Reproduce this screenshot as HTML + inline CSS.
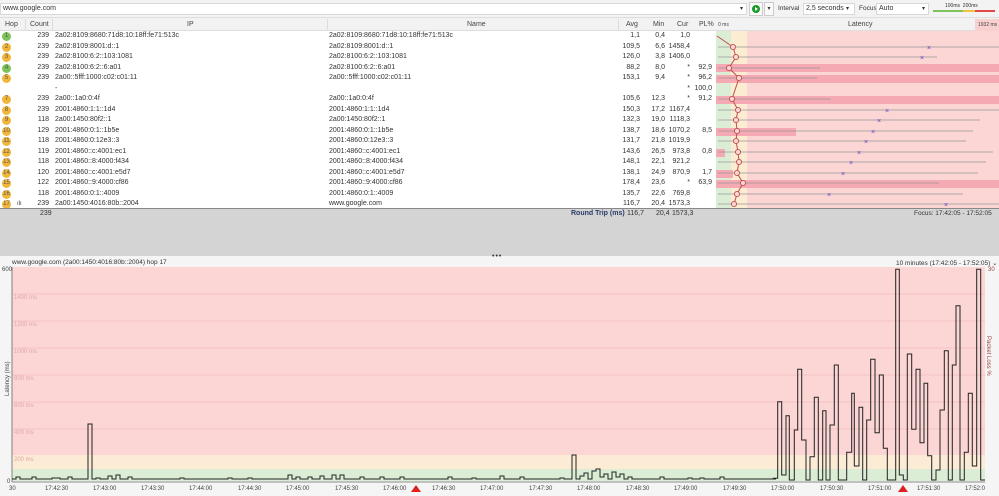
<!DOCTYPE html>
<html><head><meta charset="utf-8"><style>
*{margin:0;padding:0;box-sizing:border-box}
body{width:999px;height:496px;overflow:hidden;background:#fff;font-family:"Liberation Sans",sans-serif;font-size:7px;color:#333;position:relative}
.a{position:absolute;white-space:nowrap}
.r{position:absolute;left:0;width:999px;height:10.5px;line-height:10.5px}
.r span{position:absolute;white-space:nowrap}
.h{position:absolute;top:1px;width:9px;height:9px;border-radius:50%;left:2px;font-size:6px;line-height:9px;text-align:center;color:#555;font-style:normal}
.g{background:#7cc35a}.o{background:#f2b63a}
.c{right:950px;text-align:right}.ip{left:55px}.nm{left:329px}
.av{right:359px}.mn{right:334px}.cu{right:309px}.pl{right:287px}
.hd{position:absolute;top:19px;height:12px;line-height:12px;color:#444;font-size:7px}
</style></head><body>
<!-- toolbar -->
<div class="a" style="left:0;top:0;width:999px;height:18px;background:#f3f3f3;border-bottom:1px solid #ddd"></div>
<div class="a" style="left:0;top:3px;width:747px;height:12px;background:#fff;border:1px solid #d8d8d8;padding-left:2px;line-height:10px">www.google.com</div>
<div class="a" style="left:740px;top:5px;font-size:6px">▾</div>
<div class="a" style="left:749px;top:2px;width:14px;height:14px;border:1px solid #ccc;background:#fafafa"></div>
<div class="a" style="left:752px;top:5px;width:8px;height:8px;border-radius:50%;background:#1a9a2a"></div>
<div class="a" style="left:755px;top:7px;width:0;height:0;border-left:3px solid #fff;border-top:2px solid transparent;border-bottom:2px solid transparent"></div>
<div class="a" style="left:764px;top:2px;width:10px;height:14px;border:1px solid #ccc;background:#fafafa;font-size:6px;text-align:center;line-height:12px">▾</div>
<div class="a" style="left:778px;top:5px;font-size:6.5px">Interval</div>
<div class="a" style="left:803px;top:3px;width:52px;height:12px;background:#fff;border:1px solid #d8d8d8;padding-left:2px;line-height:10px;font-size:7px">2,5 seconds</div>
<div class="a" style="left:846px;top:5px;font-size:6px">▾</div>
<div class="a" style="left:859px;top:5px;font-size:6.5px">Focus</div>
<div class="a" style="left:876px;top:3px;width:53px;height:12px;background:#fff;border:1px solid #d8d8d8;padding-left:2px;line-height:10px;font-size:7px">Auto</div>
<div class="a" style="left:922px;top:5px;font-size:6px">▾</div>
<div class="a" style="left:945px;top:3px;font-size:5px">100ms&nbsp;&nbsp;200ms</div>
<div class="a" style="left:933px;top:10px;width:62px;height:2px;background:linear-gradient(90deg,#7cc35a 0,#7cc35a 48%,#f2c340 48%,#f2c340 68%,#e04848 68%)"></div>
<!-- header -->
<div class="a" style="left:0;top:18px;width:999px;height:13px;background:#f2f2f2;border-bottom:1px solid #ddd"></div>
<div class="hd" style="left:5px">Hop</div>
<div class="hd" style="left:30px">Count</div>
<div class="hd" style="left:187px">IP</div>
<div class="hd" style="left:467px">Name</div>
<div class="hd" style="left:626px">Avg</div>
<div class="hd" style="left:653px">Min</div>
<div class="hd" style="left:677px">Cur</div>
<div class="hd" style="left:699px">PL%</div>
<div class="hd" style="left:718px;font-size:5px">0 ms</div>
<div class="hd" style="left:848px">Latency</div>
<div class="a" style="left:975px;top:19px;width:24px;height:12px;background:#f9d0d0"></div>
<div class="hd" style="left:978px;font-size:5px">1932 ms</div>
<div class="a" style="left:25px;top:19px;width:1px;height:12px;background:#ddd"></div>
<div class="a" style="left:52px;top:19px;width:1px;height:12px;background:#ddd"></div>
<div class="a" style="left:327px;top:19px;width:1px;height:12px;background:#ddd"></div>
<div class="a" style="left:618px;top:19px;width:1px;height:12px;background:#ddd"></div>

<!-- rows -->
<div class="r" style="top:31px"><i class="h g">1</i><span class="c">239</span><span class="ip">2a02:8109:8680:71d8:10:18ff:fe71:513c</span><span class="nm">2a02:8109:8680:71d8:10:18ff:fe71:513c</span><span class="av">1,1</span><span class="mn">0,4</span><span class="cu">1,0</span></div>
<div class="r" style="top:41.5px"><i class="h o">2</i><span class="c">239</span><span class="ip">2a02:8109:8001:d::1</span><span class="nm">2a02:8109:8001:d::1</span><span class="av">109,5</span><span class="mn">6,6</span><span class="cu">1458,4</span></div>
<div class="r" style="top:52px"><i class="h o">3</i><span class="c">239</span><span class="ip">2a02:8100:6:2::103:1081</span><span class="nm">2a02:8100:6:2::103:1081</span><span class="av">126,0</span><span class="mn">3,8</span><span class="cu">1406,0</span></div>
<div class="r" style="top:62.5px"><i class="h g">4</i><span class="c">239</span><span class="ip">2a02:8100:6:2::6:a01</span><span class="nm">2a02:8100:6:2::6:a01</span><span class="av">88,2</span><span class="mn">8,0</span><span class="cu">*</span><span class="pl">92,9</span></div>
<div class="r" style="top:73px"><i class="h o">5</i><span class="c">239</span><span class="ip">2a00::5fff:1000:c02:c01:11</span><span class="nm">2a00::5fff:1000:c02:c01:11</span><span class="av">153,1</span><span class="mn">9,4</span><span class="cu">*</span><span class="pl">96,2</span></div>
<div class="r" style="top:83.5px"><span class="ip">-</span><span class="cu">*</span><span class="pl">100,0</span></div>
<div class="r" style="top:94px"><i class="h o">7</i><span class="c">239</span><span class="ip">2a00::1a0:0:4f</span><span class="nm">2a00::1a0:0:4f</span><span class="av">105,6</span><span class="mn">12,3</span><span class="cu">*</span><span class="pl">91,2</span></div>
<div class="r" style="top:104.5px"><i class="h o">8</i><span class="c">239</span><span class="ip">2001:4860:1:1::1d4</span><span class="nm">2001:4860:1:1::1d4</span><span class="av">150,3</span><span class="mn">17,2</span><span class="cu">1167,4</span></div>
<div class="r" style="top:115px"><i class="h o">9</i><span class="c">118</span><span class="ip">2a00:1450:80f2::1</span><span class="nm">2a00:1450:80f2::1</span><span class="av">132,3</span><span class="mn">19,0</span><span class="cu">1118,3</span></div>
<div class="r" style="top:125.5px"><i class="h o">10</i><span class="c">129</span><span class="ip">2001:4860:0:1::1b5e</span><span class="nm">2001:4860:0:1::1b5e</span><span class="av">138,7</span><span class="mn">18,6</span><span class="cu">1070,2</span><span class="pl">8,5</span></div>
<div class="r" style="top:136px"><i class="h o">11</i><span class="c">118</span><span class="ip">2001:4860:0:12e3::3</span><span class="nm">2001:4860:0:12e3::3</span><span class="av">131,7</span><span class="mn">21,8</span><span class="cu">1019,9</span></div>
<div class="r" style="top:146.5px"><i class="h o">12</i><span class="c">119</span><span class="ip">2001:4860::c:4001:ec1</span><span class="nm">2001:4860::c:4001:ec1</span><span class="av">143,6</span><span class="mn">26,5</span><span class="cu">973,8</span><span class="pl">0,8</span></div>
<div class="r" style="top:157px"><i class="h o">13</i><span class="c">118</span><span class="ip">2001:4860::8:4000:f434</span><span class="nm">2001:4860::8:4000:f434</span><span class="av">148,1</span><span class="mn">22,1</span><span class="cu">921,2</span></div>
<div class="r" style="top:167.5px"><i class="h o">14</i><span class="c">120</span><span class="ip">2001:4860::c:4001:e5d7</span><span class="nm">2001:4860::c:4001:e5d7</span><span class="av">138,1</span><span class="mn">24,9</span><span class="cu">870,9</span><span class="pl">1,7</span></div>
<div class="r" style="top:178px"><i class="h o">15</i><span class="c">122</span><span class="ip">2001:4860::9:4000:cf86</span><span class="nm">2001:4860::9:4000:cf86</span><span class="av">178,4</span><span class="mn">23,6</span><span class="cu">*</span><span class="pl">63,9</span></div>
<div class="r" style="top:188.5px"><i class="h o">16</i><span class="c">118</span><span class="ip">2001:4860:0:1::4009</span><span class="nm">2001:4860:0:1::4009</span><span class="av">135,7</span><span class="mn">22,6</span><span class="cu">769,8</span></div>
<div class="r" style="top:199px"><i class="h o">17</i><span style="left:17px;font-size:6px">ılı</span><span class="c">239</span><span class="ip">2a00:1450:4016:80b::2004</span><span class="nm">www.google.com</span><span class="av">116,7</span><span class="mn">20,4</span><span class="cu">1573,3</span></div>

<!-- latency graph -->
<svg class="a" style="left:716px;top:31px" width="283" height="178">
<rect x="0" y="0" width="15" height="178" fill="#dcedd5"/>
<rect x="15" y="0" width="16" height="178" fill="#fbecd2"/>
<rect x="31" y="0" width="252" height="178" fill="#fcd5d5"/>
<g fill="#f5a9b2">
<rect x="0" y="33" width="283" height="8"/><rect x="0" y="44" width="283" height="8"/><rect x="0" y="65" width="283" height="8"/>
<rect x="0" y="97" width="80" height="8"/><rect x="0" y="118" width="9" height="8"/><rect x="0" y="139" width="17" height="8"/><rect x="0" y="149" width="283" height="8"/>
</g>
<g stroke="#999" stroke-width="0.7">
<line x1="2" y1="16" x2="283" y2="16"/><line x1="2" y1="26" x2="221" y2="26"/><line x1="2" y1="37" x2="104" y2="37"/><line x1="2" y1="47" x2="101" y2="47"/><line x1="2" y1="68" x2="115" y2="68"/><line x1="2" y1="79" x2="283" y2="79"/><line x1="2" y1="89" x2="264" y2="89"/><line x1="2" y1="100" x2="257" y2="100"/><line x1="2" y1="110" x2="250" y2="110"/><line x1="2" y1="121" x2="277" y2="121"/><line x1="2" y1="131" x2="270" y2="131"/><line x1="2" y1="142" x2="262" y2="142"/><line x1="2" y1="152" x2="223" y2="152"/><line x1="2" y1="163" x2="247" y2="163"/><line x1="2" y1="173" x2="283" y2="173"/>
</g>
<polyline fill="none" stroke="#c0504d" stroke-width="1" points="1,5 17,16 20,26 13,37 23,47 16,68 22,79 20,89 21,100 20,110 22,121 23,131 21,142 27,152 21,163 18,173"/>
<g fill="#fcd5d5" stroke="#c0504d" stroke-width="0.9">
<circle cx="17" cy="16" r="2.6"/><circle cx="20" cy="26" r="2.6"/><circle cx="13" cy="37" r="2.6"/><circle cx="23" cy="47" r="2.6"/><circle cx="16" cy="68" r="2.6"/><circle cx="22" cy="79" r="2.6"/><circle cx="20" cy="89" r="2.6"/><circle cx="21" cy="100" r="2.6"/><circle cx="20" cy="110" r="2.6"/><circle cx="22" cy="121" r="2.6"/><circle cx="23" cy="131" r="2.6"/><circle cx="21" cy="142" r="2.6"/><circle cx="27" cy="152" r="2.6"/><circle cx="21" cy="163" r="2.6"/><circle cx="18" cy="173" r="2.6"/>
</g>
<g fill="#5a3fc0" font-size="7" font-family="Liberation Sans">
<text x="211" y="19">×</text><text x="204" y="29">×</text><text x="169" y="82">×</text><text x="161" y="92">×</text><text x="155" y="103">×</text><text x="148" y="113">×</text><text x="141" y="124">×</text><text x="133" y="134">×</text><text x="125" y="145">×</text><text x="111" y="166">×</text><text x="228" y="176">×</text>
</g>
</svg>

<!-- gray area -->
<div class="a" style="left:0;top:208px;width:999px;height:48px;background:#d4d4d4;border-top:1px solid #888"></div>
<div class="a" style="left:40px;top:210px">239</div>
<div class="a" style="left:571px;top:210px;color:#2a3a6a;font-weight:bold">Round Trip (ms)</div>
<div class="a" style="left:627px;top:210px">116,7</div>
<div class="a" style="left:656px;top:210px">20,4</div>
<div class="a" style="left:672px;top:210px">1573,3</div>
<div class="a" style="left:914px;top:210px;font-size:6.5px">Focus: 17:42:05 - 17:52:05</div>
<div class="a" style="left:0;top:256px;width:999px;height:240px;background:#f5f5f5"></div>
<div class="a" style="left:492px;top:253px;font-size:7px;letter-spacing:1px">•••</div>
<div class="a" style="left:12px;top:259px;font-size:6.5px">www.google.com (2a00:1450:4016:80b::2004) hop 17</div>
<div class="a" style="left:896px;top:259px;font-size:6.5px">10 minutes (17:42:05 - 17:52:05) ⌄</div>

<!-- chart -->
<svg class="a" style="left:0;top:266px" width="999" height="230" font-family="Liberation Sans">
<rect x="12" y="1" width="973" height="188" fill="#fcd5d5"/>
<rect x="12" y="189" width="973" height="14" fill="#fcebd5"/>
<rect x="12" y="203" width="973" height="12" fill="#dcedd5"/>
<g stroke="#f0bcbc" stroke-width="0.7"><line x1="12" y1="28" x2="985" y2="28"/><line x1="12" y1="55" x2="985" y2="55"/><line x1="12" y1="82" x2="985" y2="82"/><line x1="12" y1="109" x2="985" y2="109"/><line x1="12" y1="136" x2="985" y2="136"/><line x1="12" y1="163" x2="985" y2="163"/></g>
<g fill="#e0a8a8" font-size="6"><text x="14" y="33">1400 ms</text><text x="14" y="60">1200 ms</text><text x="14" y="87">1000 ms</text><text x="14" y="114">800 ms</text><text x="14" y="141">600 ms</text><text x="14" y="168">400 ms</text><text x="14" y="195">200 ms</text></g>
<line x1="12" y1="1" x2="12" y2="216" stroke="#666" stroke-width="0.8"/>
<line x1="12" y1="216" x2="985" y2="216" stroke="#666" stroke-width="0.8"/>
<text x="2" y="5" font-size="6" fill="#444">600</text>
<text x="7" y="217" font-size="6" fill="#444">0</text>
<text x="988" y="5" font-size="6" fill="#a04040">30</text>
<text transform="translate(9,130) rotate(-90)" font-size="6" fill="#444">Latency (ms)</text>
<text transform="translate(987,70) rotate(90)" font-size="6" fill="#a04040">Packet Loss %</text>
<path id="ln" fill="none" stroke="#222" stroke-width="1" d=""/>
<g font-size="6" fill="#444">
<text x="9" y="224">30</text><text x="45" y="224">17:42:30</text><text x="93" y="224">17:43:00</text><text x="141" y="224">17:43:30</text><text x="189" y="224">17:44:00</text><text x="238" y="224">17:44:30</text><text x="286" y="224">17:45:00</text><text x="335" y="224">17:45:30</text><text x="383" y="224">17:46:00</text><text x="432" y="224">17:46:30</text><text x="480" y="224">17:47:00</text><text x="529" y="224">17:47:30</text><text x="577" y="224">17:48:00</text><text x="626" y="224">17:48:30</text><text x="674" y="224">17:49:00</text><text x="723" y="224">17:49:30</text><text x="771" y="224">17:50:00</text><text x="820" y="224">17:50:30</text><text x="868" y="224">17:51:00</text><text x="917" y="224">17:51:30</text><text x="965" y="224">17:52:0</text>
</g>
<polygon points="411,226 416,219 421,226" fill="#e02020"/>
<polygon points="898,226 903,219 908,226" fill="#e02020"/>
</svg>
<script>
(function(){
var pts=[];
function s(x,y){pts.push([x,y]);}
var bumps={17:211,35:211,55:212,58:212,70:211,88:158,98:212,108:210,118:209,130:211,182:212,230:212,250:212,289:209,296:211,310:211,322:210,332:209,340:209,360:211,380:211,400:211,450:211,475:212,500:210,520:211,560:212,575:189,580:210,586:207,592:205,597:203,601:211,606:208,612:206,617:211,620:208,630:211,660:211,690:212,700:212,720:211};
for(var i=12;i<773;i+=4){var y=bumps[i]||bumps[i+1]||bumps[i+2]||bumps[i+3]||213;s(i,y);s(i+4,y);}
var st=[[220,685],[233,455],[245,675],[258,497],[268,690],[283,540],[293,358],[305,570],[318,690],[330,620],[343,442],[355,690],[368,482],[378,690],[390,525],[403,345],[415,690],[440,607],[455,430],[463,648],[477,472],[488,690],[500,510],[512,328],[525,548],[538,375],[550,595],[562,690],[587,58],[598,675],[610,690],[622,312],[635,538],[648,358],[660,578],[672,400],[683,617],[695,690],[708,660],[720,480],[733,302],[745,690],[757,345],[768,167],[780,690],[793,607],[805,430],[817,648],[830,58],[842,690],[852,690]];
var px=773;
for(var j=0;j<st.length;j++){var X=700+st[j][0]/3,Y=250+st[j][1]/3-266;if(X<px)X=px;var ly=pts[pts.length-1][1];s(X,ly);s(X,Y);px=X;}
s(985,pts[pts.length-1][1]);
document.getElementById("ln").setAttribute("d","M"+pts.map(function(p){return p[0].toFixed(1)+","+p[1].toFixed(1)}).join(" L"));
})();
</script>
</body></html>
